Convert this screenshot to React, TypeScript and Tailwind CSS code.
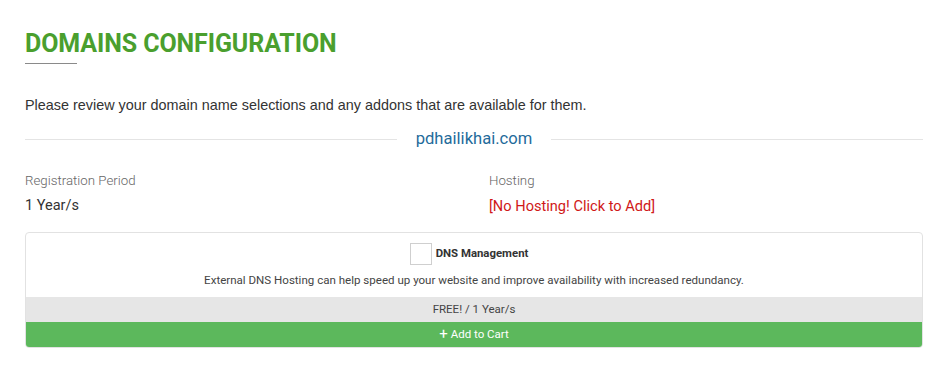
export default function App() {
  return (
    <div className="w-[945px] h-[375px] bg-white px-[25px] pt-[28px] font-['Roboto',sans-serif] overflow-hidden">
      <h1 className="text-[25px] leading-[32px] font-bold text-[#4a9f2e] tracking-[-0.1px]">
        DOMAINS CONFIGURATION
      </h1>
      <div className="mt-[3px] w-[52px] h-px bg-[#8a8a8a]" />

      <p className="mt-[31px] font-['Liberation_Sans',Arial,sans-serif] text-[14.4px] leading-[20px] text-[#333]">
        Please review your domain name selections and any addons that are available for them.
      </p>

      <div className="mt-[14px] flex items-center gap-[19px] w-[898px]">
        <div className="flex-1 h-px bg-[#e4e4e4]" />
        <span className="text-[16.6px] leading-[20px] text-[#1f6b9b]">pdhailikhai.com</span>
        <div className="flex-1 h-px bg-[#e4e4e4]" />
      </div>

      <div className="mt-[23px] grid grid-cols-2 w-[928px]">
        <div>
          <div className="text-[13.3px] leading-[18px] text-[#666] font-light">Registration Period</div>
          <div className="mt-[7px] text-[14.5px] leading-[18px] text-[#333]">1 Year/s</div>
        </div>
        <div>
          <div className="text-[13.3px] leading-[18px] text-[#666] font-light">Hosting</div>
          <div className="mt-[7px] text-[14.6px] leading-[18px] text-[#d01818]">[No Hosting! Click to Add]</div>
        </div>
      </div>

      <div className="mt-[17px] w-[898px] border border-[#e2e2e2] rounded-[4px] overflow-hidden">
        <div className="pt-[10px] pb-[9px] text-center">
          <div className="flex items-center justify-center gap-[4px] pr-[10px]">
            <span className="w-[22px] h-[22px] border border-[#cfcfcf] bg-white" />
            <span className="text-[11.4px] font-bold text-[#333]">DNS Management</span>
          </div>
          <p className="mt-[7px] text-[11.55px] leading-[16px] text-[#444]">
            External DNS Hosting can help speed up your website and improve availability with increased redundancy.
          </p>
        </div>
        <div className="h-[25px] bg-[#e6e6e6] flex items-center justify-center text-[11.5px] text-[#444]">
          FREE! / 1 Year/s
        </div>
        <div className="h-[25px] bg-[#5cb85c] flex items-center justify-center text-[11.5px] text-white">
          <span className="text-[15px] leading-none mr-[3px]">+</span>Add to Cart
        </div>
      </div>
    </div>
  );
}
